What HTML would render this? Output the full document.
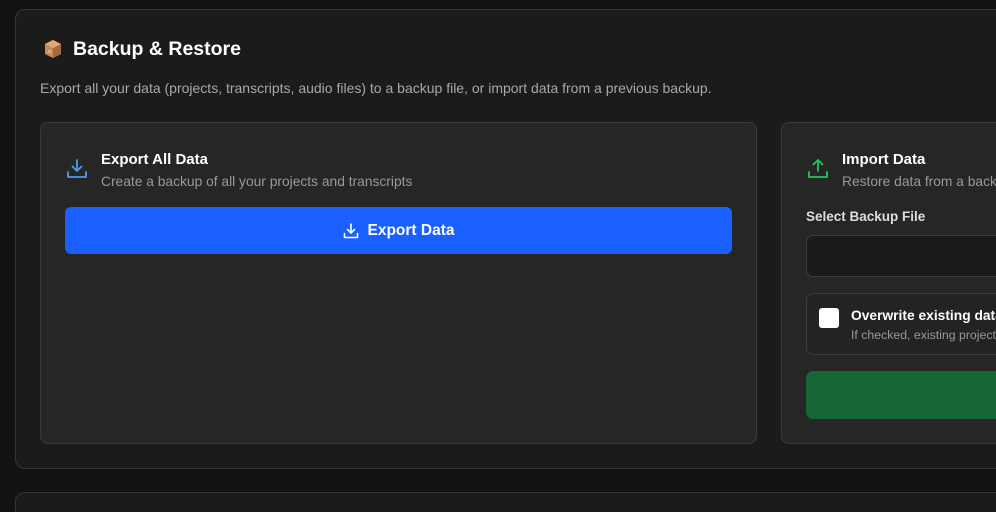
<!DOCTYPE html>
<html><head><style>
*{box-sizing:border-box;margin:0;padding:0}
html,body{width:996px;height:512px;overflow:hidden}
body{background:#121212;font-family:"Liberation Sans",sans-serif;color:#fff;position:relative}
.wrap{position:absolute;left:0;top:0;width:996px;height:512px;overflow:hidden}
.card{position:absolute;left:15px;top:9px;width:1000px;height:460px;background:#1b1b1b;border:1px solid #363636;border-radius:10px}
.card2{position:absolute;left:15px;top:492px;width:1000px;height:60px;background:#1b1b1b;border:1px solid #363636;border-radius:10px}
.abs{position:absolute}
.panel{position:absolute;top:122px;height:322px;background:#262626;border:1px solid #3b3b3b;border-radius:8px}
</style></head><body><div class="wrap">
<div class="card"></div>
<div class="card2"></div>
<div class="abs" style="left:43px;top:39px;width:20px;height:20px">
<svg width="20" height="20" viewBox="0 0 20 20"><path d="M10 1L18 5V15L10 19L2 15V5Z" fill="#c98b55"/><path d="M10 9L18 5V15L10 19Z" fill="#a86b3c"/><path d="M2 5L10 9L18 5L10 1Z" fill="#e0a874"/><rect x="5" y="11" width="3" height="3" fill="#e6b2a0" opacity=".8"/></svg></div>
<div class="abs" style="left:73px;top:38px;font-size:19.5px;font-weight:bold">Backup &amp; Restore</div>
<div class="abs" style="left:40px;top:80px;font-size:14px;color:#a8a8a8;white-space:nowrap">Export all your data (projects, transcripts, audio files) to a backup file, or import data from a previous backup.</div>

<div class="panel" style="left:40px;width:717px"></div>
<svg class="abs" style="left:66px;top:158px" width="22" height="22" viewBox="0 0 22 22" fill="none" stroke="#4d9bf0" stroke-width="1.8" stroke-linecap="round" stroke-linejoin="round"><path d="M11 2V13M6.5 8.5L11 13L15.5 8.5M2 14V19H20V14"/></svg>
<div class="abs" style="left:101px;top:151px;font-size:15px;font-weight:bold">Export All Data</div>
<div class="abs" style="left:101px;top:174px;font-size:13.8px;color:#999;white-space:nowrap">Create a backup of all your projects and transcripts</div>
<div class="abs" style="left:65px;top:207px;width:667px;height:47px;background:#1a5fff;border-radius:6px;display:flex;align-items:center;justify-content:center;font-size:15.5px;font-weight:bold">
<svg width="16" height="16" viewBox="0 0 16 16" fill="none" stroke="#fff" stroke-width="1.6" stroke-linecap="round" stroke-linejoin="round" style="margin-right:9px"><path d="M8 1V10M4.5 6.5L8 10L11.5 6.5M1.5 10.5V14.5H14.5V10.5"/></svg>Export Data</div>

<div class="panel" style="left:781px;width:260px"></div>
<svg class="abs" style="left:807px;top:158px" width="22" height="22" viewBox="0 0 22 22" fill="none" stroke="#22c55e" stroke-width="1.8" stroke-linecap="round" stroke-linejoin="round"><path d="M11 13V2M6.5 6.5L11 2L15.5 6.5M2 14V19H20V14"/></svg>
<div class="abs" style="left:842px;top:151px;font-size:15px;font-weight:bold;white-space:nowrap">Import Data</div>
<div class="abs" style="left:842px;top:174px;font-size:13.8px;color:#999;white-space:nowrap">Restore data from a backup file</div>
<div class="abs" style="left:806px;top:209px;font-size:13.5px;font-weight:bold;color:#ddd">Select Backup File</div>
<div class="abs" style="left:806px;top:235px;width:220px;height:42px;background:#1b1b1b;border:1px solid #3d3d3d;border-radius:7px"></div>
<div class="abs" style="left:806px;top:293px;width:220px;height:62px;background:#232323;border:1px solid #3d3d3d;border-radius:7px"></div>
<div class="abs" style="left:819px;top:308px;width:20px;height:20px;background:#fff;border-radius:3px"></div>
<div class="abs" style="left:851px;top:308px;font-size:13.8px;font-weight:bold;white-space:nowrap">Overwrite existing data</div>
<div class="abs" style="left:851px;top:328px;font-size:12.3px;color:#999;white-space:nowrap">If checked, existing projects will be replaced</div>
<div class="abs" style="left:806px;top:371px;width:220px;height:48px;background:#166534;border-radius:7px"></div>
</div></body></html>
